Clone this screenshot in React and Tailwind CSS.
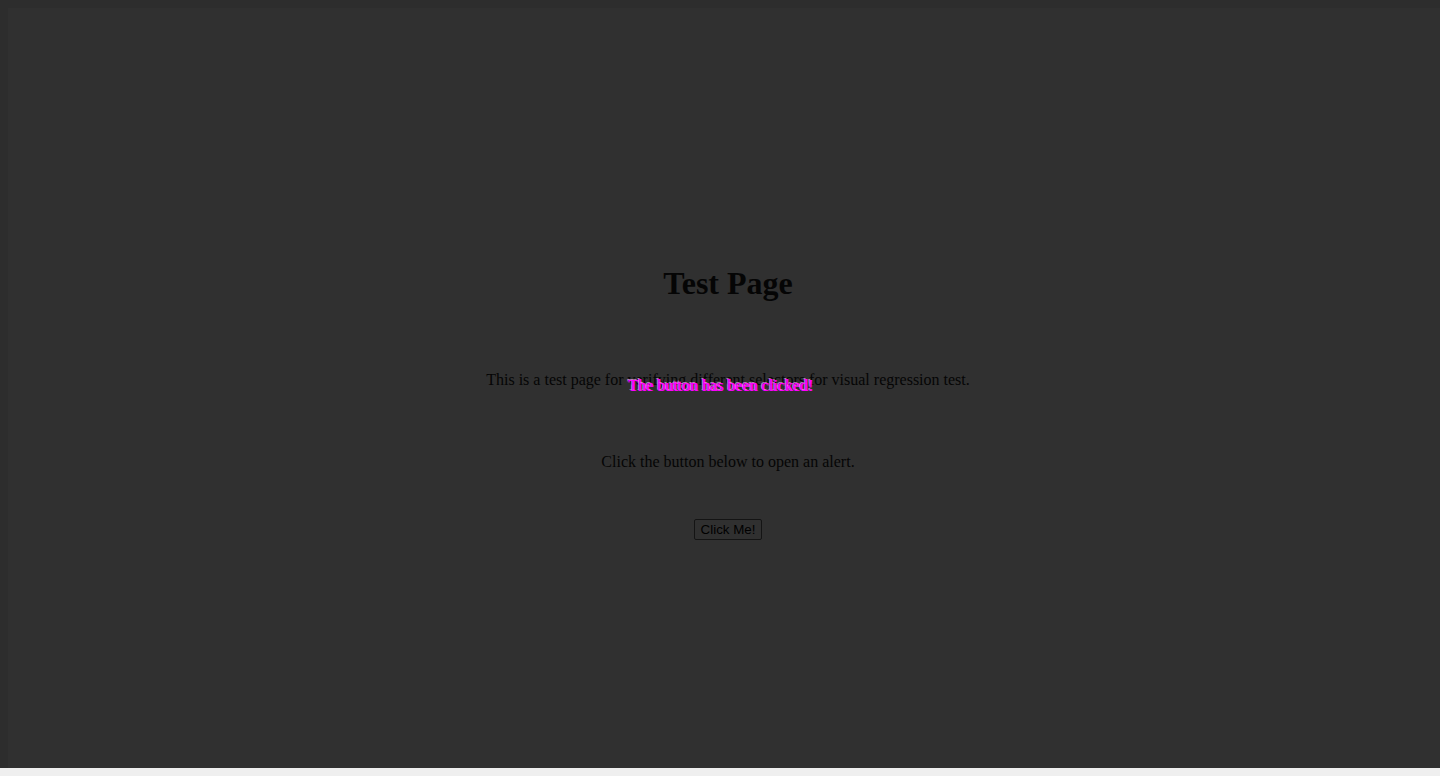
import React from 'react';

export default function App() {
  return (
    <div className="min-h-screen bg-white" style={{ fontFamily: '"Liberation Serif", "Times New Roman", serif' }}>
      <div className="w-[1440px] h-[776px] bg-[#efefef]">
        <div className="h-[768px] bg-[#2d2d2d] pl-2 pt-2">
          <div className="relative h-full bg-[#303030] overflow-visible">
            <div className="w-[1440px] flex flex-col items-center pt-[257px] text-[#050505]">
              <h1 className="text-[32px] font-bold leading-[37px]">Test Page</h1>
              <p className="mt-[69px] text-[16px] leading-[18px]">
                This is a test page for verifying different selectors for visual regression test.
              </p>
              <p className="mt-[64px] text-[16px] leading-[18px]">Click the button below to open an alert.</p>
              <button
                className="mt-[48px] h-[21px] px-[6px] border border-[#141414] rounded-[2px] text-[13.33px] leading-none text-black"
                style={{ fontFamily: '"Liberation Sans", Arial, sans-serif' }}
              >
                Click Me!
              </button>
            </div>
            <div className="absolute left-[620px] top-[369px] text-[16px] leading-[18px] text-[#ff00ff] whitespace-nowrap [text-shadow:-1px_-1px_0_rgba(255,170,255,0.7),1px_0_0_#ff00ff]">
              The button has been clicked!
            </div>
          </div>
        </div>
      </div>
    </div>
  );
}
